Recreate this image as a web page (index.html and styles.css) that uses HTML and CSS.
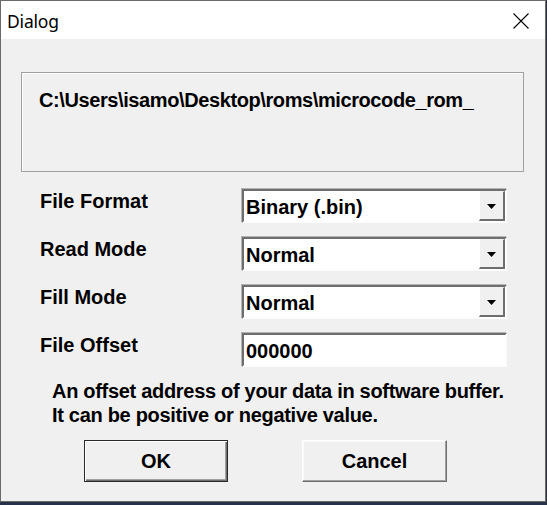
FILE: index.html
```html
<!DOCTYPE html>
<html>
<head>
<meta charset="utf-8">
<link rel="stylesheet" href="styles.css">
</head>
<body>
<div class="window">
  <div class="titlebar">
    <span class="title">Dialog</span>
    <svg class="close" width="16" height="16" viewBox="0 0 16 16"><path d="M0.5 0.5 L15.5 15.5 M15.5 0.5 L0.5 15.5" stroke="#000" stroke-width="1.1" fill="none"/></svg>
  </div>
  <div class="client">
    <div class="pathbox">C:\Users\isamo\Desktop\roms\microcode_rom_</div>
    <div class="form">
      <div class="label">File Format</div>
      <div class="combo"><span class="value">Binary (.bin)</span><span class="dropbtn"><svg width="9" height="5" viewBox="0 0 9 5"><path d="M0 0 H9 L4.5 5 Z" fill="#000"/></svg></span></div>
      <div class="label">Read Mode</div>
      <div class="combo"><span class="value">Normal</span><span class="dropbtn"><svg width="9" height="5" viewBox="0 0 9 5"><path d="M0 0 H9 L4.5 5 Z" fill="#000"/></svg></span></div>
      <div class="label">Fill Mode</div>
      <div class="combo"><span class="value">Normal</span><span class="dropbtn"><svg width="9" height="5" viewBox="0 0 9 5"><path d="M0 0 H9 L4.5 5 Z" fill="#000"/></svg></span></div>
      <div class="label">File Offset</div>
      <div class="edit"><span class="value">000000</span></div>
    </div>
    <p class="hint">An offset address of your data in software buffer.<br>It can be positive or negative value.</p>
    <div class="buttons">
      <div class="btn default">OK</div>
      <div class="btn cancel">Cancel</div>
    </div>
  </div>
</div>
</body>
</html>
```
FILE: styles.css
```css
html, body {
  margin: 0;
  padding: 0;
}
body {
  background: #26324c;
  width: 547px;
  height: 505px;
  overflow: hidden;
}
.window {
  box-sizing: border-box;
  width: 546px;
  height: 502px;
  border: 1px solid #6a6a6a;
  background: #f0f0f0;
  font-family: "Liberation Sans", Arial, sans-serif;
  font-weight: bold;
  font-size: 20px;
  color: #000;
}
.titlebar {
  height: 38px;
  background: #fff;
  display: flex;
  align-items: center;
  justify-content: space-between;
  padding: 1px 16px 0 6px;
  box-sizing: border-box;
}
.title {
  font-family: "Noto Sans", "Open Sans", sans-serif;
  font-weight: normal;
  font-size: 17.5px;
  letter-spacing: -0.2px;
  color: #000;
}
.close {
  display: block;
  margin-top: 1px;
}
.client {
  padding: 33px 0 0 20px;
}
.pathbox {
  box-sizing: border-box;
  width: 503px;
  height: 100px;
  border: 1px solid #a0a0a0;
  box-shadow: inset 1px 1px 0 #fff;
  padding: 15px 0 0 17px;
  line-height: 24px;
  letter-spacing: -0.4px;
}
.form {
  margin-top: 17px;
  margin-left: 19px;
  display: grid;
  grid-template-columns: 202px 265px;
  row-gap: 14px;
}
.label {
  line-height: 24px;
}
.combo, .edit {
  box-sizing: border-box;
  height: 34px;
  background: #fff;
  border-top: 2px solid #6e6e6e;
  border-left: 2px solid #6e6e6e;
  border-right: 2px solid #fcfcfc;
  border-bottom: 2px solid #fcfcfc;
  box-shadow: -1px -1px 0 #b4b4b4;
  display: flex;
  align-items: stretch;
}
.value {
  flex: 1;
  padding-left: 2px;
  line-height: 30px;
  padding-top: 1px;
}
.dropbtn {
  width: 26px;
  box-sizing: border-box;
  background: #f0f0f0;
  border-top: 1px solid #f0f0f0;
  border-left: 1px solid #fff;
  border-right: 2px solid #6e6e6e;
  border-bottom: 2px solid #6e6e6e;
  display: flex;
  align-items: center;
  justify-content: center;
  padding-top: 1px;
}
.dropbtn svg {
  display: block;
}
.hint {
  margin: 12px 0 0 31px;
  line-height: 24px;
  letter-spacing: -0.3px;
}
.buttons {
  margin: 13px 0 0 63px;
  display: flex;
  gap: 74px;
}
.btn {
  box-sizing: border-box;
  height: 42px;
  display: flex;
  align-items: center;
  justify-content: center;
  background: #f0f0f0;
}
.default {
  width: 144px;
  border: 1px solid #2a2a2a;
  box-shadow: inset 1px 1px 0 #fff, inset -1px -1px 0 #6e6e6e, inset -2px -2px 0 #a0a0a0;
}
.cancel {
  width: 145px;
  border-top: 1px solid #fff;
  border-left: 1px solid #fff;
  border-right: 1px solid #6e6e6e;
  border-bottom: 1px solid #6e6e6e;
  box-shadow: inset -1px -1px 0 #a0a0a0, inset 1px 1px 0 #f8f8f8;
}
```
